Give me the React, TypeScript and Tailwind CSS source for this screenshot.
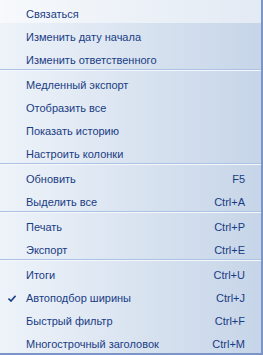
import React from "react";

type Item = { label: string; shortcut?: string; checked?: boolean; hover?: boolean } | "sep";

const items: Item[] = [
  { label: "Связаться", hover: true },
  { label: "Изменить дату начала" },
  { label: "Изменить ответственного" },
  "sep",
  { label: "Медленный экспорт" },
  { label: "Отобразить все" },
  { label: "Показать историю" },
  { label: "Настроить колонки" },
  "sep",
  { label: "Обновить", shortcut: "F5" },
  { label: "Выделить все", shortcut: "Ctrl+A" },
  "sep",
  { label: "Печать", shortcut: "Ctrl+P" },
  { label: "Экспорт", shortcut: "Ctrl+E" },
  "sep",
  { label: "Итоги", shortcut: "Ctrl+U" },
  { label: "Автоподбор ширины", shortcut: "Ctrl+J", checked: true },
  { label: "Быстрый фильтр", shortcut: "Ctrl+F" },
  { label: "Многострочный заголовок", shortcut: "Ctrl+M" },
];

export default function App() {
  return (
    <div
      className="w-[263px] h-[355px] bg-gradient-to-r from-[#eef3f9] to-[#c6d5e8] border-r-2 border-b-2 border-[#7b95c6] flex flex-col text-[#193c84] text-[11px]"
      style={{ fontFamily: '"Liberation Sans", Arial, sans-serif' }}
    >
      {items.map((it, i) =>
        it === "sep" ? (
          <div key={i} className="h-[2px] border-t border-[#adc2e2] border-b border-b-[#f4f7fb]" />
        ) : (
          <div
            key={i}
            className={`relative h-[23px] flex items-center pt-[5px] pl-[26px] pr-[16px] ${it.hover ? "bg-white/50" : ""}`}
          >
            {it.checked && (
              <svg className="absolute left-[8px] top-[11px]" width="8" height="7" viewBox="0 0 8 7">
                <path d="M0.5 3.5 L3 6 L7.5 0.8" fill="none" stroke="#193c84" strokeWidth="1.6" />
              </svg>
            )}
            <span className="flex-1">{it.label}</span>
            {it.shortcut && <span>{it.shortcut}</span>}
          </div>
        )
      )}
    </div>
  );
}
